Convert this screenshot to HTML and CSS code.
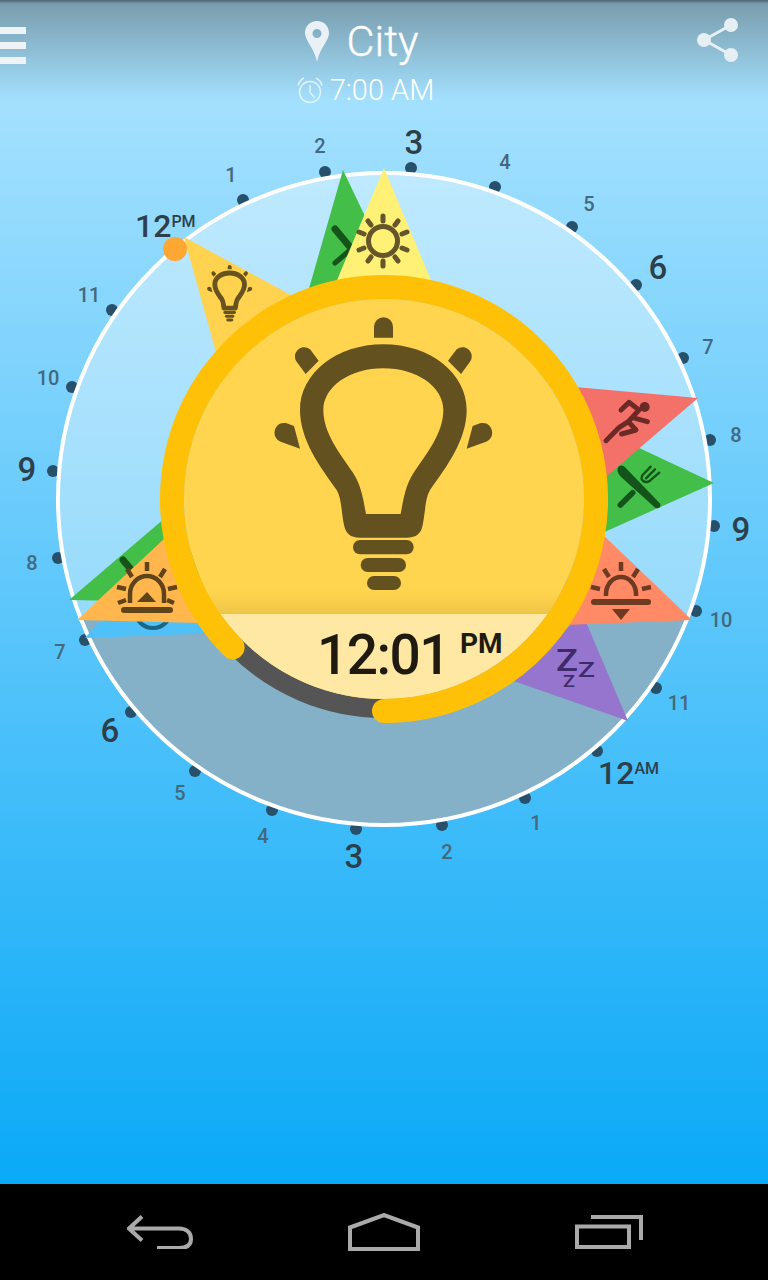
FILE: index.html
```html
<!DOCTYPE html>
<html lang="en">
<head>
    <meta charset="UTF-8">
    <meta name="viewport" content="width=device-width, initial-scale=1.0">
    <title>City Alarm Clock</title>
    <link rel="stylesheet" href="styles.css">
</head>
<body>
    <div class="screen">
        <div class="sky">
            <header class="topbar">
                <div class="menu-icon"><span></span><span></span><span></span></div>
                <div class="place">
                    <div class="city">
                        <svg class="pin" width="24" height="41" viewBox="0 0 24 41">
                            <path fill-rule="evenodd" d="M12 0C5 0 0 5 0 12c0 8 9 14 12 29C15 26 24 20 24 12 24 5 19 0 12 0Zm0 8a4.500 4.500 0 1 1 0 9 4.500 4.500 0 0 1 0-9Z"/>
                        </svg>
                        <span class="city-name">City</span>
                    </div>
                    <div class="alarm">
                        <svg class="alarm-icon" width="28" height="27" viewBox="0 0 28 27">
                            <circle cx="14" cy="15" r="10.500"/>
                            <path d="M14 8v7.500l4.500 5"/>
                            <path d="M2 8.500C3 5 5 2.500 8 1M26 8.500C25 5 23 2.500 20 1"/>
                        </svg>
                        <span>7:00 AM</span>
                    </div>
                </div>
                <svg class="share" width="42" height="44" viewBox="0 0 42 44">
                    <path d="M7 22 34 7M7 22l27 15"/>
                    <circle cx="7" cy="22" r="7"/>
                    <circle cx="34" cy="7" r="7"/>
                    <circle cx="34" cy="37" r="7"/>
                </svg>
            </header>

            <!-- viewBox starts at 108 so the numbers below are screen coordinates -->
            <svg class="dial" width="768" height="780" viewBox="0 108 768 780">
                <defs>
                    <symbol id="bulb" viewBox="0 0 750 870">
                        <path fill-rule="evenodd" d="M370 103C510 103 620 190 620 300 620 390 560 470 510 540 495 565 497 600 488 645 483 672 470 682 440 683L300 683C270 682 258 672 252 645 243 600 245 565 230 540 180 470 120 390 120 300 120 190 230 103 370 103ZM370 175C270 175 190 230 190 300 190 370 240 430 280 490 305 530 310 570 318 612L422 612C430 570 435 530 460 490 500 430 550 370 550 300 550 230 470 175 370 175Z"/>
                        <rect x="279" y="690" width="182" height="43" rx="21"/>
                        <rect x="302" y="744" width="136" height="42" rx="21"/>
                        <rect x="321" y="798" width="102" height="42" rx="21"/>
                        <path d="M342 83V50a28 28 0 0 1 57 0V83Z"/>
                        <path d="M137 192 110 155C92 128 125 98 150 118L176 152Z"/>
                        <path d="M603 192 630 155C648 128 615 98 590 118L564 152Z"/>
                        <path d="M120 416 62 395C28 380 45 330 80 340L102 348Z"/>
                        <path d="M620 416 678 395C712 380 695 330 660 340L638 348Z"/>
                    </symbol>
                    <linearGradient id="faceShade" x1="0" y1="0" x2="0" y2="1">
                        <stop offset="0" stop-color="#ffd54f"/>
                        <stop offset="1" stop-color="#efc546"/>
                    </linearGradient>
                </defs>

                <g class="ticks">
                    <circle cx="411" cy="168" r="6"/><circle cx="325" cy="172" r="6"/><circle cx="243" cy="200" r="6"/>
                    <circle cx="112" cy="310" r="6"/><circle cx="72" cy="387" r="6"/><circle cx="53" cy="471" r="6"/>
                    <circle cx="58" cy="558" r="6"/><circle cx="85" cy="640" r="6"/><circle cx="131" cy="712" r="6"/>
                    <circle cx="195" cy="771" r="6"/><circle cx="272" cy="810" r="6"/><circle cx="356" cy="829" r="6"/>
                    <circle cx="442" cy="825" r="6"/><circle cx="525" cy="798" r="6"/><circle cx="597" cy="751" r="6"/>
                    <circle cx="656" cy="688" r="6"/><circle cx="696" cy="611" r="6"/><circle cx="714" cy="526" r="6"/>
                    <circle cx="710" cy="440" r="6"/><circle cx="683" cy="358" r="6"/><circle cx="636" cy="285" r="6"/>
                    <circle cx="572" cy="227" r="6"/><circle cx="495" cy="187" r="6"/>
                </g>

                <g class="hours">
                    <text x="231" y="182">1</text><text x="320" y="153">2</text><text x="505" y="169">4</text>
                    <text x="589" y="211">5</text><text x="708" y="354">7</text><text x="736" y="442">8</text>
                    <text x="721" y="627">10</text><text x="679" y="710">11</text><text x="536" y="830">1</text>
                    <text x="447" y="859">2</text><text x="263" y="843">4</text><text x="180" y="800">5</text>
                    <text x="60" y="659">7</text><text x="32" y="570">8</text><text x="48" y="385">10</text>
                    <text x="89" y="302">11</text>
                </g>
                <g class="hours-major">
                    <text x="414" y="154">3</text><text x="658" y="279">6</text><text x="741" y="541">9</text>
                    <text x="354" y="868">3</text><text x="110" y="742">6</text><text x="27" y="481">9</text>
                    <text class="noon-label" x="135" y="237">12<tspan class="meridiem" dy="-10">PM</tspan></text>
                    <text class="noon-label" x="598" y="784">12<tspan class="meridiem" dy="-10">AM</tspan></text>
                </g>

                <circle class="day" cx="384" cy="499" r="326"/>
                <path class="night" d="M384 499 687.300 618.500A326 326 0 0 1 81 620Z"/>
                <circle class="rim" cx="384" cy="499" r="326"/>

                <!-- morning wedges, lower left -->
                <polygon class="w-green" points="69,600 165,518 230,603"/>
                <line class="knife-dark" x1="123" y1="560" x2="150" y2="592"/>
                <polygon class="w-blue" points="85,638 180,530 220,633"/>
                <circle class="clock-dark" cx="153" cy="610" r="18"/>
                <polygon class="w-amber" points="77,620 165,538 240,624"/>
                <g class="sun-brown">
                    <path d="M130 603V594a17 18 0 0 1 34 0V603"/>
                    <path d="M147 562v9M165 569l-5 8M177 587l-9 2M174 603l-7-3M127 569l5 8M117 587l9 2M118 603l8-3"/>
                    <rect class="solid" x="121" y="607" width="52" height="6" rx="3"/>
                    <polygon class="solid" points="137,602 156,602 147,592"/>
                </g>

                <!-- noon wedges, top -->
                <polygon class="w-gold" points="184,237 300,300 225,385"/>
                <use class="bulb-small" href="#bulb" x="204" y="263.500" width="52" height="60"/>
                <polygon class="w-green" points="343,170 308,292 400,290"/>
                <line class="knife-dark" x1="335" y1="229" x2="350" y2="247"/>
                <line class="knife-thin" x1="335" y1="263" x2="350" y2="250"/>
                <polygon class="w-yellow" points="384,168 335,285 433,285"/>
                <g class="sun-olive">
                    <circle cx="383" cy="241" r="14.500"/>
                    <path d="M383 221v-5M383 261v5M395 225l3-4M371 225l-3-4M402 234l5-2M364 234l-5-2M402 248l5 2M364 248l-5 2M395 257l3 4M371 257l-3 4"/>
                </g>

                <!-- evening wedges, right -->
                <polygon class="w-green" points="714,483 600,534 590,425"/>
                <polygon class="w-red" points="698,398 575,387 600,482"/>
                <g class="runner" transform="translate(560 370) scale(.3333)">
                    <circle cx="254" cy="111" r="15"/>
                    <path d="M183 120 207 97 237 120 205 155 228 180 185 192"/>
                    <path d="M138 212 178 172 205 155"/>
                    <path d="M226 145 262 155"/>
                </g>
                <g class="cutlery" transform="translate(560 370) scale(.3333)">
                    <path class="solid" d="M175 298C178 285 190 288 197 297L298 402C302 412 290 416 283 408L195 328C182 318 173 306 175 298Z"/>
                    <path class="handle" d="M181 405 218 368"/>
                    <path d="M272 290 248 315C238 330 255 342 270 332L298 308M285 298 258 325"/>
                </g>
                <polygon class="w-purple" points="628,721 583,615 505,678"/>
                <polygon class="w-coral" points="692,620 600,532 565,625"/>
                <g class="sun-rust">
                    <path d="M606 596V594a15 17 0 0 1 30 0V596"/>
                    <path d="M621 562v9M638 569l-5 8M651 587l-9 2M604 569l5 8M591 587l9 2"/>
                    <rect class="solid" x="591" y="599" width="60" height="6" rx="3"/>
                    <polygon class="solid" points="612,609 630,609 621,620"/>
                </g>
                <text class="zed zed-big" x="556" y="671" textLength="22" lengthAdjust="spacingAndGlyphs">Z</text>
                <text class="zed zed-mid" x="578" y="677" textLength="17" lengthAdjust="spacingAndGlyphs">Z</text>
                <text class="zed zed-small" x="563" y="687" textLength="12" lengthAdjust="spacingAndGlyphs">Z</text>

                <circle class="noon-dot" cx="175" cy="249" r="12"/>

                <!-- centre: progress ring with clock face -->
                <path class="ring-back" d="M384 708.500A209.500 209.500 0 0 1 234 645"/>
                <circle class="face" cx="384" cy="499" r="200"/>
                <path class="face-shade" d="M206 590H562A200 200 0 0 1 547.600 614H220.400A200 200 0 0 1 206 590Z"/>
                <path class="face-low" d="M220.400 614A200 200 0 0 0 547.600 614Z"/>
                <path class="ring" d="M384 711A212 212 0 1 0 232.600 647.400"/>
                <use class="bulb-big" href="#bulb" x="260" y="310" width="250" height="290"/>
                <text class="time" x="317" y="674">12:01</text>
                <text class="time-suffix" x="460" y="653">PM</text>
            </svg>
        </div>

        <nav class="navbar">
            <svg width="66" height="34" viewBox="0 0 66 34">
                <path d="M15 1.500 2 13.500 15 25.500M2 13.500H52C60 13.500 64 18 64 24S60 33 52 33H30"/>
            </svg>
            <svg width="72" height="38" viewBox="0 0 72 38">
                <path d="M2 14.500 36 2 70 14.500V36H2Z"/>
            </svg>
            <svg width="68" height="34" viewBox="0 0 68 34">
                <path d="M2 11.500H54V32H2ZM16 2H66V25"/>
            </svg>
        </nav>
    </div>
</body>
</html>
```

FILE: styles.css
```css
body {
    margin: 0;
    font-family: Roboto, "Liberation Sans", sans-serif;
}

.screen {
    display: flex;
    flex-direction: column;
    width: 768px;
    height: 1280px;
    overflow: hidden;
}

.sky {
    flex: 1;
    background: linear-gradient(#a3e0fe 108px, #0aa9f7);
}

.topbar {
    display: flex;
    justify-content: space-between;
    align-items: flex-start;
    height: 108px;
    box-sizing: border-box;
    padding: 18px 29px 0 0;
    background: linear-gradient(#4f6674, #7a9dae 4px, #a3e0fe 100px);
}

.menu-icon {
    display: flex;
    flex-direction: column;
    gap: 8px;
    margin-top: 9px;
}

.menu-icon span {
    display: block;
    width: 26px;
    height: 7px;
    background-color: #eef3f6;
}

.place {
    display: flex;
    flex-direction: column;
    align-items: center;
}

.city {
    display: flex;
    align-items: center;
    gap: 18px;
    height: 42px;
    padding-top: 2px;
}

.pin {
    fill: #eaf1f6;
}

.city-name {
    font-size: 43px;
    font-weight: 300;
    -webkit-text-stroke: 0.4px #fff;
    color: #fff;
}

.alarm {
    display: flex;
    align-items: center;
    gap: 6px;
    margin-top: 11px;
    margin-left: 7px;
    font-size: 29px;
    font-weight: 300;
    color: #fff;
}

.alarm-icon {
    fill: none;
    stroke: #dff3fd;
    stroke-width: 1.500;
}

.share {
    fill: #e6eff4;
    stroke: #e6eff4;
    stroke-width: 3;
}

.share circle {
    stroke: none;
}

.dial {
    display: block;
}

.ticks circle {
    fill: #27506a;
}

.hours text {
    font-size: 20px;
    font-weight: 500;
    fill: #44687d;
    text-anchor: middle;
}

.hours-major text {
    font-size: 33px;
    font-weight: 500;
    fill: #2c3f4b;
    text-anchor: middle;
}

.hours-major .noon-label {
    font-size: 32px;
    text-anchor: start;
}

.hours-major .meridiem {
    font-size: 16px;
    font-weight: 500;
}

.day {
    fill: rgba(255, 255, 255, 0.37);
}

.night {
    fill: #84b1c8;
}

.rim {
    fill: none;
    stroke: #fff;
    stroke-width: 4;
}

.w-green { fill: #43be48; }
.w-blue { fill: #4fc1f8; }
.w-amber { fill: #ffb74d; }
.w-gold { fill: #ffd24f; }
.w-yellow { fill: #fff176; }
.w-red { fill: #f4716a; }
.w-coral { fill: #ff8a65; }
.w-purple { fill: #9575cd; }

.knife-dark {
    stroke: #14541b;
    stroke-width: 7;
    stroke-linecap: round;
}

.knife-thin {
    stroke: #14541b;
    stroke-width: 5;
    stroke-linecap: round;
}

.clock-dark {
    fill: none;
    stroke: #1d6585;
    stroke-width: 4;
}

.sun-brown,
.sun-rust {
    fill: none;
    stroke-width: 4.500;
}

.sun-olive {
    fill: none;
    stroke: #64552a;
    stroke-width: 5;
    stroke-linecap: round;
}

.sun-brown { stroke: #5f4319; }
.sun-rust { stroke: #6e3a22; }

.sun-brown .solid { fill: #5f4319; stroke: none; }
.sun-rust .solid { fill: #6e3a22; stroke: none; }

.bulb-small {
    fill: #66531f;
}

.bulb-big {
    fill: #635120;
}

.runner {
    fill: none;
    stroke: #6b2a26;
    stroke-width: 15;
    stroke-linecap: round;
    stroke-linejoin: round;
}

.runner circle {
    fill: #6b2a26;
    stroke: none;
}

.cutlery {
    fill: none;
    stroke: #14541b;
    stroke-width: 7;
    stroke-linecap: round;
}

.cutlery .solid {
    fill: #14541b;
    stroke: #14541b;
    stroke-width: 5;
}

.cutlery .handle {
    stroke-width: 17;
}

.zed {
    font-weight: 500;
    fill: #3f2a6b;
}

.zed-big { font-size: 32px; }
.zed-mid { font-size: 21px; }
.zed-small { font-size: 17px; }

.noon-dot {
    fill: #ffa733;
}

.face {
    fill: #ffd54f;
}

.face-shade {
    fill: url(#faceShade);
}

.face-low {
    fill: #ffe8a3;
}

.ring-back {
    fill: none;
    stroke: #555;
    stroke-width: 19;
}

.ring {
    fill: none;
    stroke: #ffc107;
    stroke-width: 24;
    stroke-linecap: round;
}

.time {
    font-size: 55px;
    font-weight: 500;
    letter-spacing: -1.500px;
    fill: #1f1b10;
}

.time-suffix {
    font-size: 28px;
    font-weight: 700;
    fill: #1f1b10;
}

.navbar {
    display: flex;
    justify-content: center;
    align-items: center;
    gap: 155px;
    height: 96px;
    padding-left: 2px;
    background-color: #000;
}

.navbar svg {
    fill: none;
    stroke: #aaa;
    stroke-width: 4;
}
```
